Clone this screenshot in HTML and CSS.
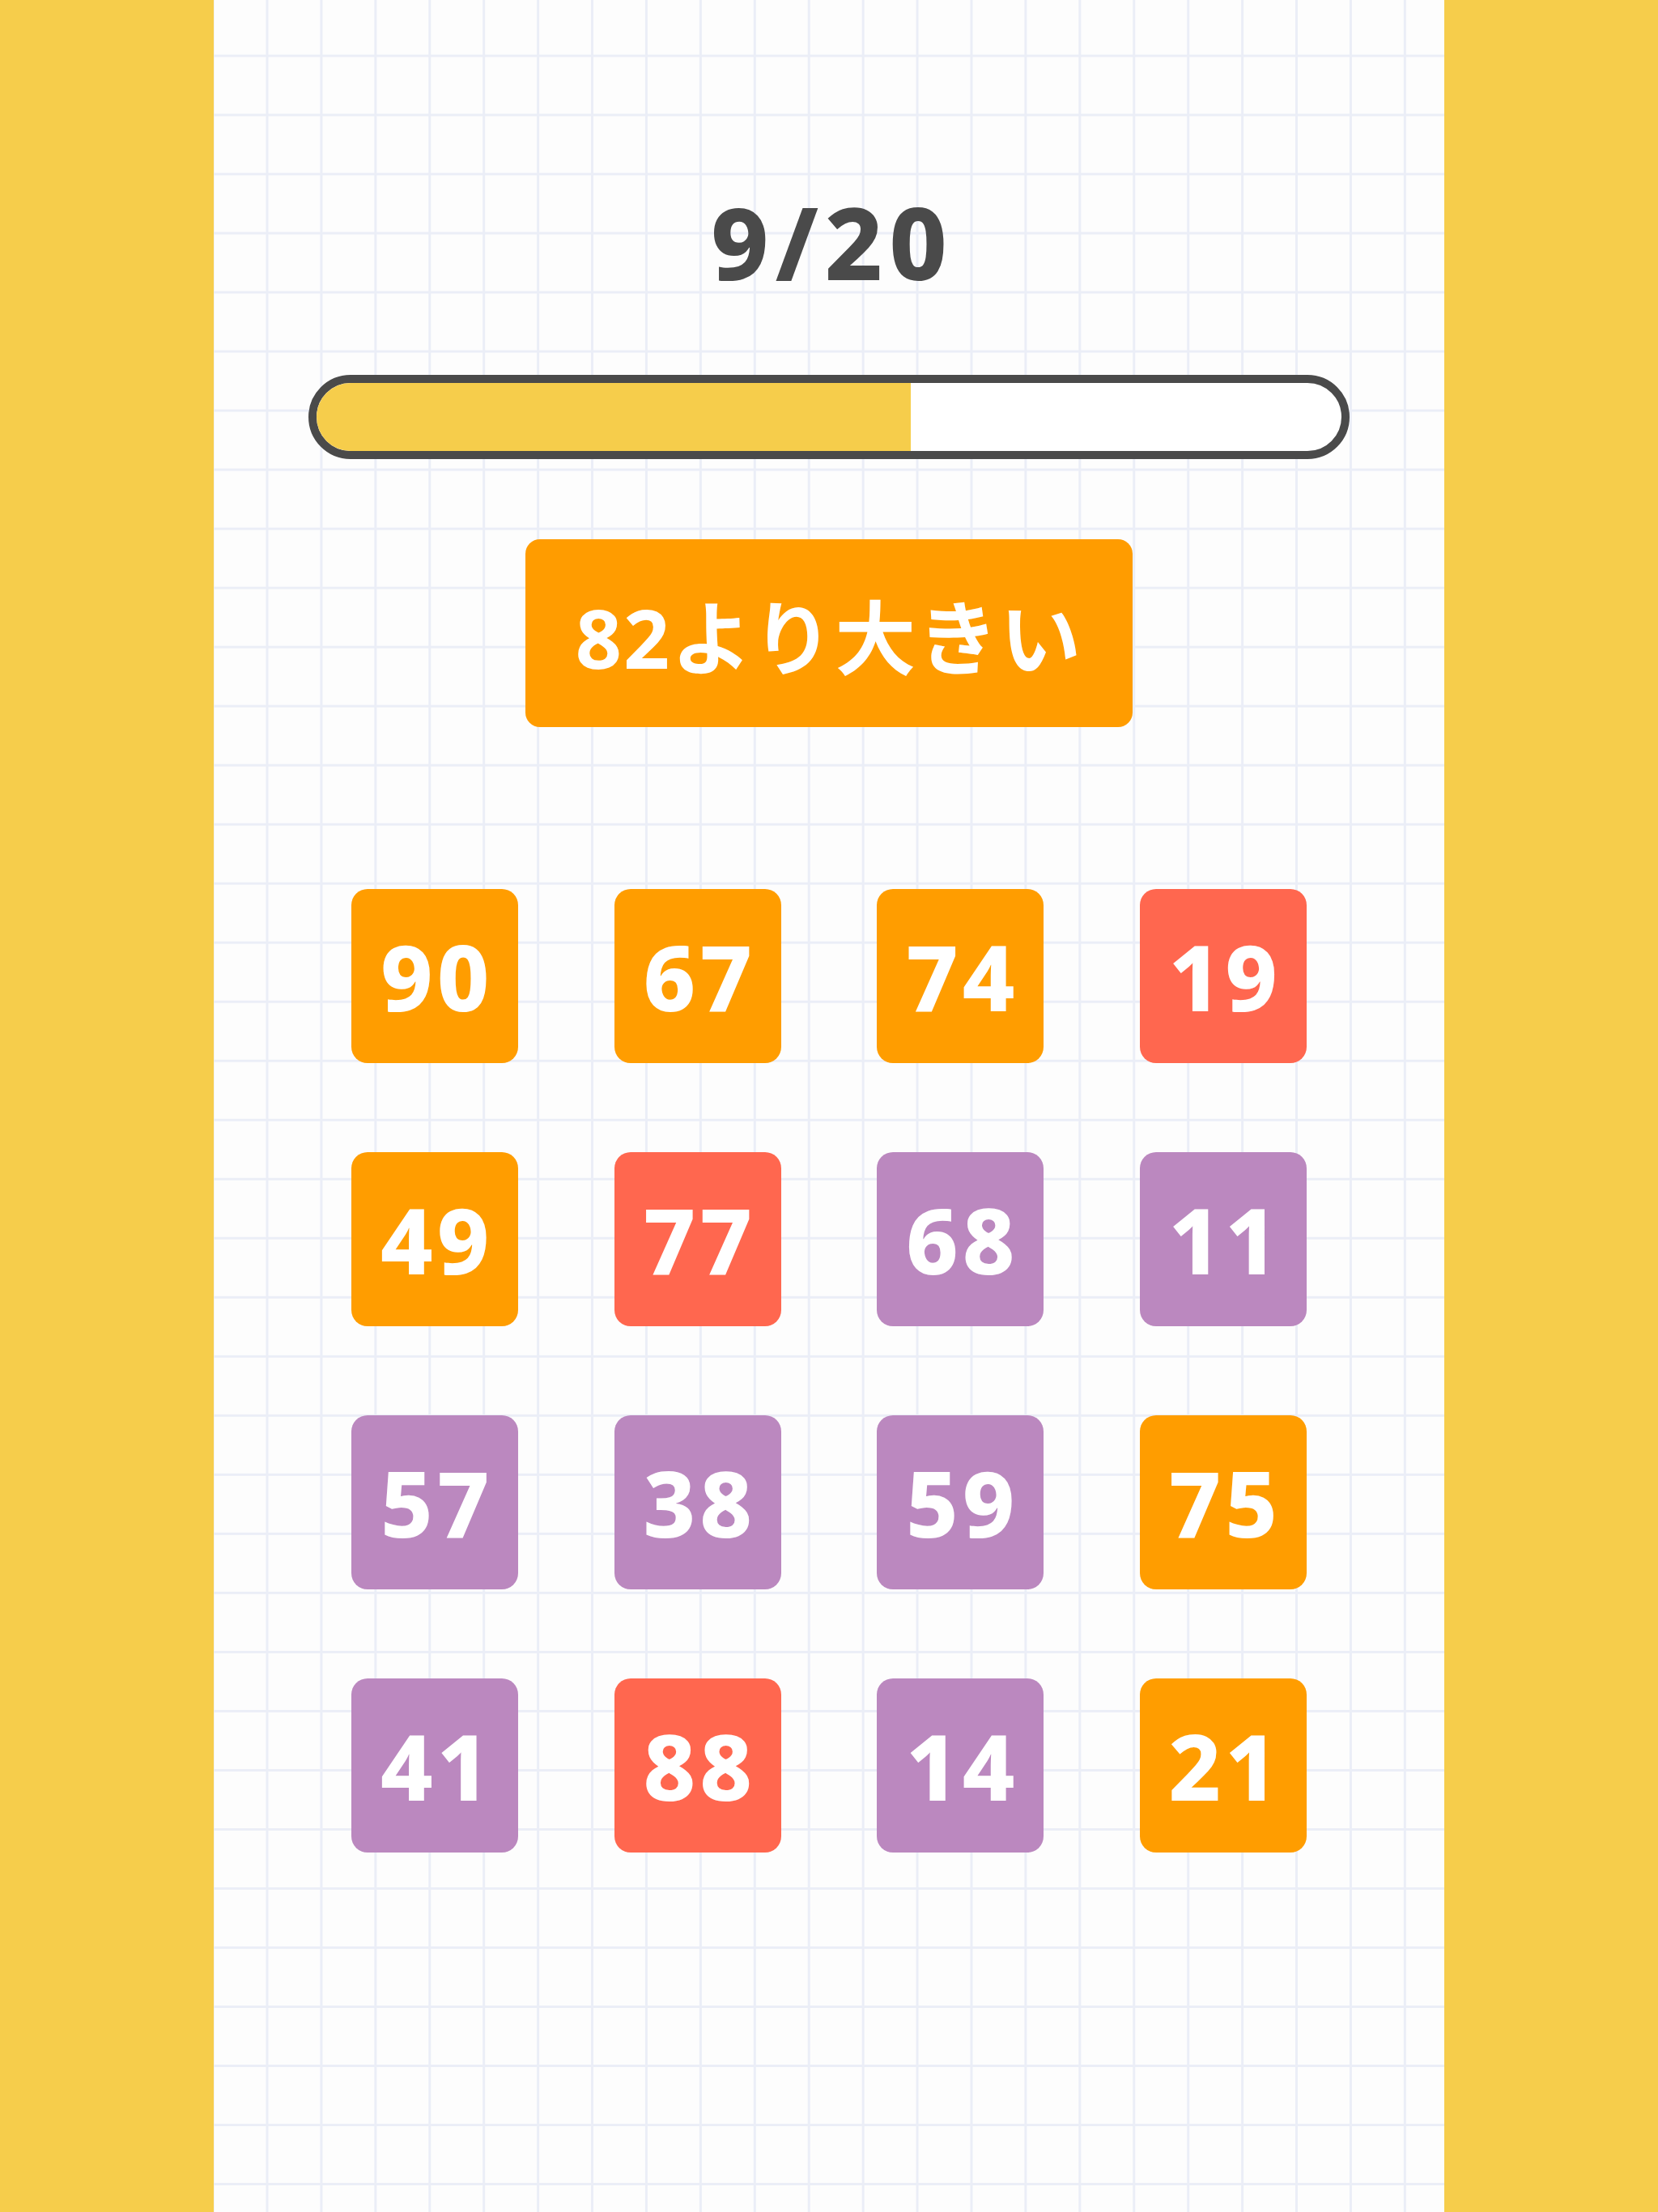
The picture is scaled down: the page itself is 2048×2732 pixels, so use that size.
FILE: index.html
```html
<!DOCTYPE html>
<html lang="ja">
<head>
    <meta charset="UTF-8">
    <meta name="viewport" content="width=device-width, initial-scale=1.0">
    <title>数字ゲーム</title>
    <link rel="stylesheet" href="styles.css">
</head>
<body>
    <div class="page">
        <div class="counter">9/20</div>
        <div class="progress">
            <div class="progress-fill" style="width: 58%"></div>
        </div>
        <div class="question">82より大きい</div>
        <div class="board">
            <div class="tile orange">90</div>
            <div class="tile orange">67</div>
            <div class="tile orange">74</div>
            <div class="tile red">19</div>
            <div class="tile orange">49</div>
            <div class="tile red">77</div>
            <div class="tile purple">68</div>
            <div class="tile purple">11</div>
            <div class="tile purple">57</div>
            <div class="tile purple">38</div>
            <div class="tile purple">59</div>
            <div class="tile orange">75</div>
            <div class="tile purple">41</div>
            <div class="tile red">88</div>
            <div class="tile purple">14</div>
            <div class="tile orange">21</div>
        </div>
    </div>
</body>
</html>
```

FILE: styles.css
```css
body {
    margin: 0;
    background-color: #f6cd4b;
    font-family: "Noto Sans", "Noto Sans CJK JP", sans-serif;
}
.page {
    width: 1520px;
    min-height: 2732px;
    margin: 0 auto;
    padding-top: 236px;
    box-sizing: border-box;
    background-color: #fdfdfd;
    background-image:
        linear-gradient(to right, #ebeef7 3px, transparent 3px),
        linear-gradient(to bottom, #ebeef7 3px, transparent 3px);
    background-size: 66.93px 73.03px;
    background-position: 64.5px 67.5px;
    display: flex;
    flex-direction: column;
    align-items: center;
}
.counter {
    font-size: 124px;
    line-height: 1;
    font-weight: 800;
    color: #4a4a4a;
    letter-spacing: 8px;
    padding-left: 8px;
}
.progress {
    margin-top: 103px;
    width: 1286px;
    height: 104px;
    box-sizing: border-box;
    border: 10px solid #4a4a4a;
    border-radius: 52px;
    background: white;
    overflow: hidden;
}
.progress-fill {
    height: 100%;
    background-color: #f6cd4b;
}
.question {
    margin-top: 99px;
    width: 750px;
    height: 232px;
    border-radius: 18px;
    background-color: #ff9c00;
    color: white;
    font-size: 100px;
    font-weight: 700;
    display: flex;
    align-items: center;
    justify-content: center;
    letter-spacing: 2px;
}
.board {
    margin-top: 200px;
    display: grid;
    grid-template-columns: repeat(4, 206px);
    grid-auto-rows: 215px;
    column-gap: 118.5px;
    row-gap: 110px;
}
.tile {
    border-radius: 20px;
    color: white;
    font-size: 112px;
    font-weight: 800;
    display: flex;
    align-items: center;
    justify-content: center;
    letter-spacing: 5px;
    padding-left: 5px;
}
.orange {
    background-color: #ff9d00;
}
.red {
    background-color: #ff674f;
}
.purple {
    background-color: #bb88bf;
}
```
